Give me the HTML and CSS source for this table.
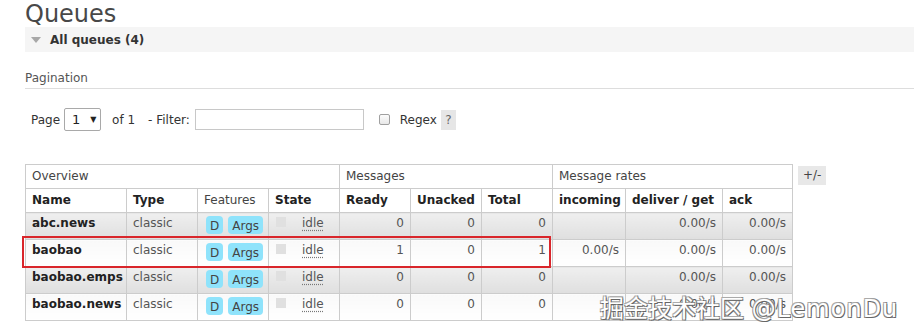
FILE: index.html
```html
<!DOCTYPE html>
<html lang="en">
<head>
<meta charset="utf-8">
<title>Queues</title>
<link rel="stylesheet" href="styles.css">
</head>
<body>
<main class="page">
  <h1 class="page-title">Queues</h1>

  <section class="section">
    <h2 class="section-head">
      <svg class="toggle" width="10" height="6" viewBox="0 0 10 6"><polygon points="0,0 10,0 5,6" fill="#a8a8a8"/></svg>
      <span>All queues (4)</span>
    </h2>

    <h3 class="sub-head">Pagination</h3>

    <div class="filter-row">
      <span class="label">Page</span>
      <span class="select"><span>1</span><span class="arrow">&#9660;</span></span>
      <span class="label of">of 1</span>
      <span class="label filter">- Filter:</span>
      <input class="filter-input" type="text" value="">
      <input class="check" type="checkbox">
      <span class="label regex">Regex</span>
      <span class="help">?</span>
    </div>

    <div class="table-wrap">
      <table class="list">
        <colgroup>
          <col style="width:101px"><col style="width:71px"><col style="width:71px"><col style="width:71px">
          <col style="width:71px"><col style="width:71px"><col style="width:71px">
          <col style="width:73px"><col style="width:97px"><col style="width:70px">
        </colgroup>
        <thead>
          <tr class="group">
            <th colspan="4">Overview</th>
            <th colspan="3">Messages</th>
            <th colspan="3">Message rates</th>
          </tr>
          <tr class="cols">
            <th>Name</th><th>Type</th><th class="plain">Features</th><th>State</th>
            <th>Ready</th><th>Unacked</th><th>Total</th>
            <th>incoming</th><th>deliver / get</th><th>ack</th>
          </tr>
        </thead>
        <tbody>
          <tr class="alt1">
            <td class="name">abc.news</td><td class="type">classic</td>
            <td><span class="badge first">D</span><span class="badge">Args</span></td>
            <td><span class="status"></span><span class="state">idle</span></td>
            <td class="num">0</td><td class="num">0</td><td class="num">0</td>
            <td class="num"></td><td class="num">0.00/s</td><td class="num">0.00/s</td>
          </tr>
          <tr class="alt2">
            <td class="name">baobao</td><td class="type">classic</td>
            <td><span class="badge first">D</span><span class="badge">Args</span></td>
            <td><span class="status"></span><span class="state">idle</span></td>
            <td class="num">1</td><td class="num">0</td><td class="num">1</td>
            <td class="num">0.00/s</td><td class="num">0.00/s</td><td class="num">0.00/s</td>
          </tr>
          <tr class="alt1">
            <td class="name">baobao.emps</td><td class="type">classic</td>
            <td><span class="badge first">D</span><span class="badge">Args</span></td>
            <td><span class="status"></span><span class="state">idle</span></td>
            <td class="num">0</td><td class="num">0</td><td class="num">0</td>
            <td class="num"></td><td class="num">0.00/s</td><td class="num">0.00/s</td>
          </tr>
          <tr class="alt2">
            <td class="name">baobao.news</td><td class="type">classic</td>
            <td><span class="badge first">D</span><span class="badge">Args</span></td>
            <td><span class="status"></span><span class="state">idle</span></td>
            <td class="num">0</td><td class="num">0</td><td class="num">0</td>
            <td class="num"></td><td class="num">0.00/s</td><td class="num">0.00/s</td>
          </tr>
        </tbody>
      </table>
      <span class="columns-btn">+/-</span>
    </div>
  </section>
</main>

<div class="highlight"></div>
<div class="watermark">掘金技术社区 <span class="handle">@LemonDu</span></div>
</body>
</html>
```

FILE: styles.css
```css
html, body {
  margin: 0;
  padding: 0;
  background: #fff;
}

body {
  font-family: "DejaVu Sans", Verdana, sans-serif;
  font-size: 12px;
  color: #444;
  overflow: hidden;
}

.page {
  padding-left: 25px;
}

.page-title {
  margin: 0;
  padding-top: 2px;
  font-size: 24px;
  line-height: 24px;
  font-weight: normal;
  color: #484848;
}

.section-head {
  margin: 1px 0 0;
  height: 25px;
  display: flex;
  align-items: center;
  background: #f5f5f5;
  font-size: 12px;
  font-weight: bold;
  color: #333;
}

.toggle {
  margin: 0 9px 0 6px;
}

.sub-head {
  margin: 18px 0 0;
  padding-bottom: 2px;
  font-size: 12px;
  line-height: 16px;
  font-weight: normal;
  color: #555;
  border-bottom: 1px solid #ddd;
}

.filter-row {
  display: flex;
  align-items: center;
  margin-top: 19px;
  padding-left: 6px;
  height: 23px;
  color: #333;
}

.select {
  box-sizing: border-box;
  display: inline-flex;
  align-items: center;
  width: 37px;
  height: 23px;
  margin-left: 4px;
  padding-left: 7px;
  border: 1px solid #a9a9a9;
  border-radius: 2px;
  font-size: 13px;
  color: #222;
}

.select .arrow {
  margin-left: 10px;
  font-size: 8px;
}

.of {
  margin-left: 11px;
}

.filter {
  margin-left: 13px;
}

.filter-input {
  box-sizing: border-box;
  width: 169px;
  height: 21px;
  margin: 0 0 0 5px;
  padding: 0 4px;
  border: 1px solid #c8c8c8;
  font: inherit;
}

.check {
  appearance: none;
  -webkit-appearance: none;
  box-sizing: border-box;
  width: 11px;
  height: 11px;
  margin: 0 0 0 15px;
  border: 1px solid #a0a0a0;
  border-radius: 2px;
  background: linear-gradient(#fcfcfc, #e8e8e8);
}

.regex {
  margin-left: 10px;
}

.help {
  box-sizing: border-box;
  width: 15px;
  height: 20px;
  margin-left: 4px;
  display: inline-flex;
  align-items: center;
  justify-content: center;
  background: #e6e6e6;
  color: #666;
}

.table-wrap {
  display: flex;
  align-items: flex-start;
  margin-top: 33px;
}

table.list {
  border-collapse: collapse;
  table-layout: fixed;
  width: 768px;
}

table.list th,
table.list td {
  border: 1px solid #ccc;
  padding: 0 6px;
  text-align: left;
  white-space: nowrap;
  overflow: hidden;
}

table.list th {
  height: 23px;
  line-height: 23px;
  background: #fff;
  color: #222;
}

table.list tr.group th {
  font-weight: normal;
  color: #444;
}

table.list th.plain {
  font-weight: normal;
  color: #444;
}

table.list td {
  box-sizing: border-box;
  height: 27px;
  padding-top: 2px;
  line-height: 16px;
  vertical-align: top;
  color: #555;
}

table.list tr.alt1 td {
  background: linear-gradient(#efefef, #dfdfdf);
}

table.list tr.alt2 td {
  background: linear-gradient(#f9f9f9, #ffffff);
}

table.list td.name {
  font-weight: bold;
  color: #222;
}

table.list td.num {
  text-align: right;
}

.badge {
  display: inline-block;
  vertical-align: top;
  margin-top: 1px;
  padding: 3px 4px 1px;
  line-height: 14px;
  border-radius: 4px;
  background: #8fe3fb;
  color: #444;
}

.badge.first {
  margin-left: 2px;
  margin-right: 5px;
}

.status {
  display: inline-block;
  width: 10px;
  height: 10px;
  margin-left: 1px;
  margin-right: 16px;
  background: #e0e0e0;
}

.state {
  text-decoration: underline dotted #777;
  text-underline-offset: 3px;
}

.columns-btn {
  margin: 2px 0 0 5px;
  padding: 0 5px;
  height: 19px;
  line-height: 19px;
  background: #e8e8e8;
  color: #444;
}

.highlight {
  position: absolute;
  left: 22px;
  top: 236px;
  width: 525px;
  height: 28px;
  border: 2px solid #d9262b;
  pointer-events: none;
}

.watermark {
  position: absolute;
  left: 600px;
  top: 297px;
  font-family: "DejaVu Sans", "Noto Sans CJK SC", sans-serif;
  font-size: 24px;
  line-height: 24px;
  color: #fff;
  white-space: nowrap;
  text-shadow:
    1px 1px 0 #666,
    -1px -1px 0 #aaa,
    1px -1px 0 #888,
    -1px 1px 0 #888;
}

.watermark .handle {
  letter-spacing: 1px;
}
```
